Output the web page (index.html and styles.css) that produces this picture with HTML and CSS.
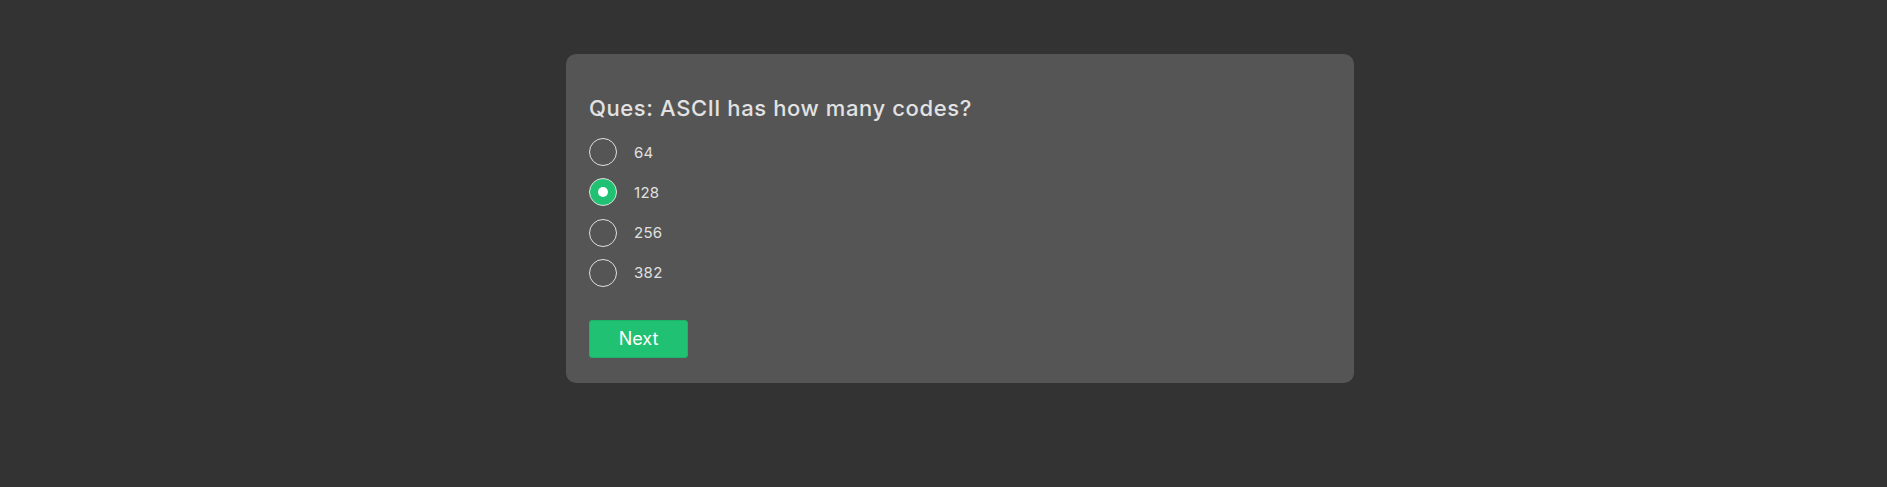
FILE: index.html
```html
<!DOCTYPE html>
<html>
<head>
<meta charset="utf-8">
<link rel="stylesheet" href="styles.css">
</head>
<body>
<div class="page">
  <div class="card">
    <h2 class="question">Ques: ASCII has how many codes?</h2>
    <ul class="options">
      <li class="option"><span class="radio"></span><span class="label">64</span></li>
      <li class="option"><span class="radio checked"></span><span class="label">128</span></li>
      <li class="option"><span class="radio"></span><span class="label">256</span></li>
      <li class="option"><span class="radio"></span><span class="label">382</span></li>
    </ul>
    <button class="next">Next</button>
  </div>
</div>
</body>
</html>
```
FILE: styles.css
```css
html, body {
  margin: 0;
  padding: 0;
  background: #333333;
  height: 100%;
}
body {
  font-family: Inter, "Noto Sans", sans-serif;
  color: #e0e0e0;
}
.page {
  display: flex;
  justify-content: center;
  padding: 54px 0 0 33px;
}
.card {
  width: 788px;
  height: 329px;
  box-sizing: border-box;
  background: #555555;
  border-radius: 10px;
  padding: 34px 23px 0 23px;
}
.question {
  margin: 0;
  font-size: 22px;
  font-weight: 500;
  letter-spacing: 0.6px;
  line-height: 40px;
  color: #e2e2e2;
}
.options {
  list-style: none;
  margin: 10px 0 0 0;
  padding: 0;
  display: flex;
  flex-direction: column;
  gap: 12.3px;
}
.option {
  display: flex;
  align-items: center;
  height: 28px;
}
.radio {
  width: 28px;
  height: 28px;
  box-sizing: border-box;
  border: 1px solid #e0e0e0;
  border-radius: 50%;
  margin-right: 17px;
  flex: none;
}
.radio.checked {
  background: #20c172;
  border-color: #e0e0e0;
  position: relative;
}
.radio.checked::after {
  content: "";
  position: absolute;
  left: 8px;
  top: 8px;
  width: 10px;
  height: 10px;
  border-radius: 50%;
  background: #ffffff;
}
.label {
  font-size: 15px;
  letter-spacing: 0.3px;
  color: #e0e0e0;
}
.next {
  margin-top: 33px;
  width: 99px;
  height: 38px;
  border: 1px solid #1db36a;
  border-radius: 3px;
  background: #20c172;
  color: #ffffff;
  font-family: Inter, "Noto Sans", sans-serif;
  font-size: 18px;
  padding: 0;
}
```
